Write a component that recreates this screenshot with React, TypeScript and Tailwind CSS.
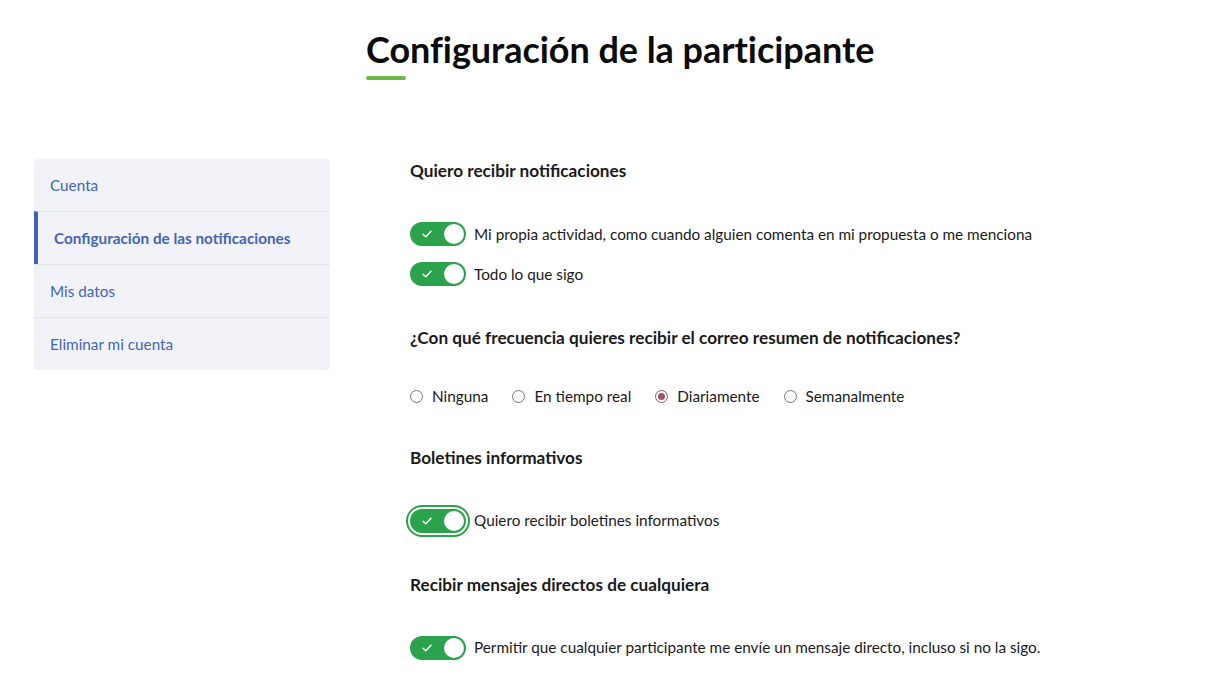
import { useState } from 'react';

const FONT = "font-['Lato','Noto_Sans',sans-serif]";

const menu = ['Cuenta', 'Configuración de las notificaciones', 'Mis datos', 'Eliminar mi cuenta'];
const freqs = ['Ninguna', 'En tiempo real', 'Diariamente', 'Semanalmente'];

function Toggle({ focused = false }: { focused?: boolean }) {
  return (
    <span
      className={
        'relative inline-flex h-[24px] w-[56px] shrink-0 items-center rounded-full bg-[#2ba24c] ' +
        (focused ? 'outline-[2.5px] outline-offset-2 outline-[#2ba24c]' : '')
      }
    >
      <svg className="absolute left-[11px] top-[6px]" width="12" height="12" viewBox="0 0 12 12" fill="none">
        <path d="M2 6.2 L4.8 8.8 L10 3.2" stroke="white" strokeWidth="1.4" strokeLinecap="round" strokeLinejoin="round" />
      </svg>
      <span className="absolute right-[2px] top-[2px] h-[20px] w-[20px] rounded-full bg-white" />
    </span>
  );
}

function Radio({ checked }: { checked: boolean }) {
  return (
    <span
      className={
        'inline-flex h-[13px] w-[13px] items-center justify-center rounded-full border ' +
        (checked ? 'border-[#a3506a]' : 'border-[#767676]')
      }
    >
      {checked && <span className="h-[7px] w-[7px] rounded-full bg-[#a3506a]" />}
    </span>
  );
}

export default function App() {
  const [freq] = useState('Diariamente');

  return (
    <div className={`${FONT} min-h-[687px] bg-white text-[#1a1a1a]`}>
      <header className="pl-[366px] pt-[27px]">
        <h1 className="text-[36px] font-bold leading-[44px] tracking-[-0.05px] text-[#0b0b0b]">Configuración de la participante</h1>
        <div className="mt-[5px] h-[4px] w-[40px] rounded-full bg-[#6cb84c]" />
      </header>

      <div className="mt-[79px] flex">
        {/* Sidebar */}
        <nav className="ml-[34px] w-[296px] self-start overflow-hidden rounded-[4px] bg-[#f2f3f8]">
          {menu.map((item, i) => (
            <div
              key={item}
              className={
                'flex items-center text-[15.3px] text-[#4665b2] ' +
                (i > 0 ? 'h-[53px] border-t border-[#e1e3ea] ' : 'h-[52px] ') +
                (i === 1 ? 'border-l-4 border-l-[#4262b8] pl-[16px] font-bold' : 'pl-[16px]')
              }
            >
              {item}
            </div>
          ))}
        </nav>

        {/* Content */}
        <main className="ml-[80px] flex flex-col text-[15.3px]">
          <h2 className="text-[17.2px] font-bold leading-[24px]">Quiero recibir notificaciones</h2>
          <div className="mt-[39px] flex flex-col gap-[16px]">
            <label className="flex items-center gap-[8px]">
              <Toggle />
              <span>Mi propia actividad, como cuando alguien comenta en mi propuesta o me menciona</span>
            </label>
            <label className="flex items-center gap-[8px]">
              <Toggle />
              <span>Todo lo que sigo</span>
            </label>
          </div>

          <h2 className="mt-[40px] text-[17.2px] font-bold leading-[24px]">
            ¿Con qué frecuencia quieres recibir el correo resumen de notificaciones?
          </h2>
          <div className="mt-[35px] flex items-center gap-[24px]">
            {freqs.map((f) => (
              <label key={f} className="flex items-center gap-[9px]">
                <Radio checked={f === freq} />
                <span>{f}</span>
              </label>
            ))}
          </div>

          <h2 className="mt-[38px] text-[17.2px] font-bold leading-[24px]">Boletines informativos</h2>
          <label className="mt-[39px] flex items-center gap-[8px]">
            <Toggle focused />
            <span>Quiero recibir boletines informativos</span>
          </label>

          <h2 className="mt-[40px] text-[17.2px] font-bold leading-[24px]">Recibir mensajes directos de cualquiera</h2>
          <label className="mt-[39px] flex items-center gap-[8px]">
            <Toggle />
            <span>Permitir que cualquier participante me envíe un mensaje directo, incluso si no la sigo.</span>
          </label>
        </main>
      </div>
    </div>
  );
}
